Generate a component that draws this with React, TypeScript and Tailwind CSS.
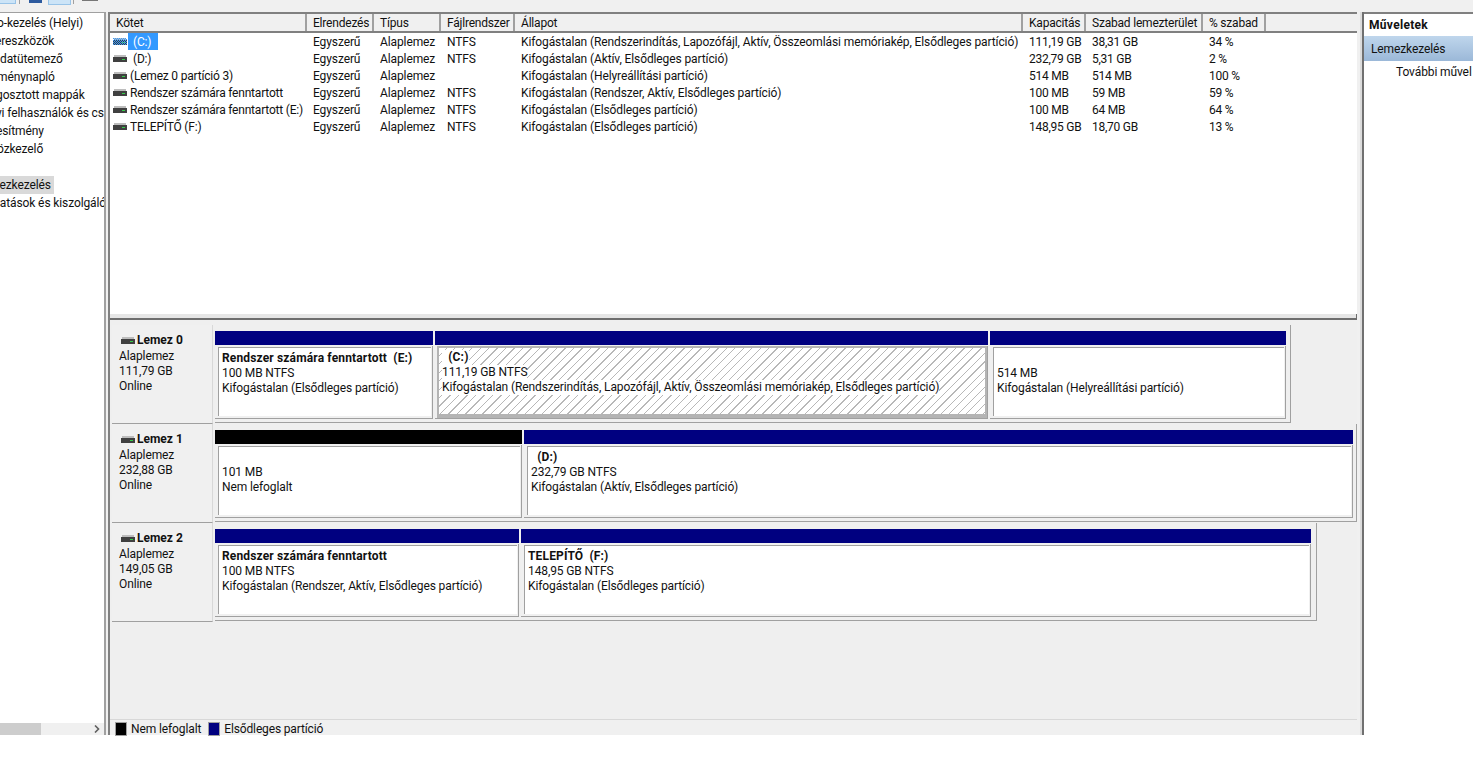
const font = "font-['Roboto',sans-serif]";

const columns = [
  { label: 'Kötet', w: 'w-[197px]' },
  { label: 'Elrendezés', w: 'w-[67px]' },
  { label: 'Típus', w: 'w-[67px]' },
  { label: 'Fájlrendszer', w: 'w-[74px]' },
  { label: 'Állapot', w: 'w-[508px]' },
  { label: 'Kapacitás', w: 'w-[63px]' },
  { label: 'Szabad lemezterület', w: 'w-[117px]' },
  { label: '% szabad', w: 'w-[63px]' },
];

const rows = [
  ['(C:)', 'Egyszerű', 'Alaplemez', 'NTFS', 'Kifogástalan (Rendszerindítás, Lapozófájl, Aktív, Összeomlási memóriakép, Elsődleges partíció)', '111,19 GB', '38,31 GB', '34 %'],
  ['(D:)', 'Egyszerű', 'Alaplemez', 'NTFS', 'Kifogástalan (Aktív, Elsődleges partíció)', '232,79 GB', '5,31 GB', '2 %'],
  ['(Lemez 0 partíció 3)', 'Egyszerű', 'Alaplemez', '', 'Kifogástalan (Helyreállítási partíció)', '514 MB', '514 MB', '100 %'],
  ['Rendszer számára fenntartott', 'Egyszerű', 'Alaplemez', 'NTFS', 'Kifogástalan (Rendszer, Aktív, Elsődleges partíció)', '100 MB', '59 MB', '59 %'],
  ['Rendszer számára fenntartott (E:)', 'Egyszerű', 'Alaplemez', 'NTFS', 'Kifogástalan (Elsődleges partíció)', '100 MB', '64 MB', '64 %'],
  ['TELEPÍTŐ (F:)', 'Egyszerű', 'Alaplemez', 'NTFS', 'Kifogástalan (Elsődleges partíció)', '148,95 GB', '18,70 GB', '13 %'],
];

// the pane is scrolled sideways, so the words start cut off at the left edge
const tree = [
  { t: 'o-kezelés (Helyi)', ml: '-ml-[3px]' },
  { t: 'ereszközök', ml: '-ml-[5px]' },
  { t: 'datütemező', ml: 'ml-0' },
  { t: 'ménynapló', ml: '-ml-[3px]' },
  { t: 'gosztott mappák', ml: '-ml-[4px]' },
  { t: 'yi felhasználók és cs', ml: '-ml-[4px]' },
  { t: 'esítmény', ml: '-ml-[4px]' },
  { t: 'özkezelő', ml: '-ml-[3px]' },
  { t: '', ml: '' },
  { t: 'nezkezelés', ml: '-ml-[7px]', selected: true },
  { t: 'tatások és kiszolgáló', ml: '-ml-[4px]' },
];

function DiskIcon({ striped }: { striped?: boolean }) {
  return (
    <svg width="14" height="7" viewBox="0 0 14 7" className="shrink-0">
      {striped && (
        <defs>
          <pattern id="dots" width="2" height="2" patternUnits="userSpaceOnUse">
            <rect width="1" height="1" fill="#3399ff" />
            <rect x="1" y="1" width="1" height="1" fill="#3399ff" />
          </pattern>
        </defs>
      )}
      <rect x="1" y="0" width="12" height="2" fill="#bdbdbd" />
      <rect x="0" y="2" width="14" height="5" fill="#404040" />
      <rect x="9" y="4" width="3" height="1" fill="#35d04a" />
      {striped && <rect x="0" y="0" width="14" height="7" fill="url(#dots)" />}
    </svg>
  );
}

function Partition({ w, bar, title, lines, selected }: { w: string; bar: string; title?: string; lines: string[]; selected?: boolean }) {
  return (
    <div className={`${w} shrink-0 flex flex-col`}>
      <div className={`h-[14px] shrink-0 ${bar}`} />
      <div className={`flex-1 min-h-0 mt-[1px] bg-[#f0f0f0] border-r border-b border-[#a0a0a0] ${selected ? 'pl-[2px]' : 'pl-[3px] pt-[1px] pr-[1px] pb-[2px]'}`}>
        {selected ? (
          <div className="h-full border-l-2 border-t-2 border-r-2 border-b-4 border-[#b4b4b4] px-[3px] pt-[2px] leading-[15px] bg-[repeating-linear-gradient(135deg,#ffffff_0px,#ffffff_5px,#b8b8b8_5px,#b8b8b8_6px)]">
            <div className="font-bold tracking-[0.15px] h-[15px] w-fit bg-white whitespace-pre">{title ?? ''}</div>
            {lines.map((l) => (
              <div key={l} className="h-[15px] w-fit bg-white whitespace-nowrap">{l}</div>
            ))}
          </div>
        ) : (
          <div className="h-full border-t border-l border-[#a0a0a0] bg-white px-[3px] pt-[3px] leading-[15px]">
            <div className="font-bold tracking-[0.15px] h-[15px] whitespace-pre">{title ?? ''}</div>
            {lines.map((l) => (
              <div key={l} className="h-[15px] whitespace-nowrap">{l}</div>
            ))}
          </div>
        )}
      </div>
    </div>
  );
}

function DiskRow({ name, size, frame, children }: { name: string; size: string; frame: string; children: React.ReactNode }) {
  return (
    <div className="flex h-[99px] shrink-0">
      <div className="w-[101px] ml-[2px] shrink-0 h-[99px] border-b border-[#a0a0a0] bg-[#f0f0f0] border-r border-r-[#d8d8d8] pl-[7px] pt-[7px] leading-[15px]">
        <div className="flex items-center gap-[2px] font-bold tracking-normal h-[16px] mb-[1px]">
          <span className="ml-[2px] flex"><DiskIcon /></span>
          {name}
        </div>
        <div>Alaplemez</div>
        <div>{size}</div>
        <div>Online</div>
      </div>
      <div className={`${frame} ml-[2px] h-[98px] shrink-0 border-r border-b border-[#a0a0a0] pt-[6px] pb-[3px]`}>
        <div className="flex h-full gap-[2px]">{children}</div>
      </div>
    </div>
  );
}

export default function App() {
  return (
    <div className={`${font} w-[1473px] h-[766px] overflow-hidden bg-white text-[12px] tracking-[-0.11px] text-[#111]`}>
      {/* toolbar, cut off at the top */}
      <div className="h-[12px] bg-[#f0f0f0] flex items-start">
        <div className="w-[16px] h-[4px] bg-[#cce4f7] border-r border-b border-[#99c4e8]" />
        <div className="w-px h-[4px] ml-[3px] bg-[#a0a0a0]" />
        <div className="w-[13px] h-[3px] ml-[9px] bg-[#2d5a9e]" />
        <div className="w-[23px] h-[5px] ml-[6px] bg-[#cce4f7] border border-t-0 border-[#99c4e8]" />
        <div className="w-px h-[4px] ml-[2px] bg-[#a0a0a0]" />
        <div className="w-[16px] h-[1px] ml-[8px] bg-[#777]" />
      </div>

      <div className="h-[723px] flex">
        {/* tree */}
        <div className="w-[104px] shrink-0 border-t border-[#a0a0a0] bg-white flex flex-col overflow-hidden">
          <div className="flex-1 pt-[1px]">
            {tree.map((item, i) => (
              <div key={i} className={`h-[18px] leading-[18px] whitespace-nowrap overflow-hidden ${item.selected ? 'bg-[#d9d9d9] w-[54px]' : ''}`}>
                {item.t && <div className={item.ml}>{item.t}</div>}
              </div>
            ))}
          </div>
          <div className="h-[12px] bg-[#f0f0f0] flex items-center">
            <div className="w-[41px] h-full bg-[#cdcdcd]" />
            <svg width="6" height="8" viewBox="0 0 6 8" className="ml-auto mr-[4px]">
              <path d="M1 0.5 L4.5 4 L1 7.5" fill="none" stroke="#606060" strokeWidth="1.6" />
            </svg>
          </div>
        </div>

        {/* splitter */}
        <div className="w-[6px] shrink-0 bg-[#f0f0f0] border-l-2 border-l-[#a0a0a0] border-r-2 border-r-[#808080]" />

        {/* center */}
        <div className="w-[1247px] shrink-0 flex flex-col border-t-2 border-[#808080] bg-[#efefef]">
          <div className="h-[300px] shrink-0 bg-white flex flex-col">
            <div className="flex h-[19px] bg-[#f0f0f0] border-b-2 border-[#808080] shrink-0 tracking-[-0.2px]">
              {columns.map((c) => (
                <div key={c.label} className={`${c.w} shrink-0 border-r-2 border-[#a0a0a0] pl-[6px] leading-[18px] whitespace-nowrap`}>
                  {c.label}
                </div>
              ))}
            </div>
            {rows.map((r, i) => (
              <div key={i} className="flex h-[17px] leading-[19px] shrink-0">
                {r.map((cell, j) =>
                  j === 0 ? (
                    <div key={j} className="w-[197px] shrink-0 flex items-center pl-[3px] whitespace-nowrap tracking-[-0.2px]">
                      <DiskIcon striped={i === 0} />
                      {i === 0 ? (
                        <span className="ml-[1px] w-[30px] h-[17px] bg-[#3399ff] text-white pl-[5px]">{cell}</span>
                      ) : i === 1 ? (
                        <span className="ml-[6px] h-[17px]">{cell}</span>
                      ) : (
                        <span className="ml-[3px] h-[17px]">{cell}</span>
                      )}
                    </div>
                  ) : (
                    <div key={j} className={`${columns[j].w} shrink-0 pl-[6px] whitespace-nowrap ${j >= 5 ? 'tracking-[-0.25px]' : ''}`}>
                      {cell}
                    </div>
                  ),
                )}
              </div>
            ))}
          </div>
          <div className="h-[6px] shrink-0 bg-[#e6e6e6] border-b-2 border-r border-b-[#6e6e6e] border-r-[#6e6e6e]" />

          <div className="flex-1 pt-[5px] flex flex-col">
            <DiskRow name="Lemez 0" size="111,79 GB" frame="w-[1076px]">
              <Partition w="w-[218px]" bar="bg-[#000080]" title={'Rendszer számára fenntartott\u00a0\u00a0(E:)'} lines={['100 MB NTFS', 'Kifogástalan (Elsődleges partíció)']} />
              <Partition w="w-[553px]" bar="bg-[#000080]" title={'\u00a0\u00a0(C:)'} lines={['111,19 GB NTFS', 'Kifogástalan (Rendszerindítás, Lapozófájl, Aktív, Összeomlási memóriakép, Elsődleges partíció)']} selected />
              <Partition w="w-[296px]" bar="bg-[#000080]" lines={['514 MB', 'Kifogástalan (Helyreállítási partíció)']} />
            </DiskRow>
            <DiskRow name="Lemez 1" size="232,88 GB" frame="w-[1142px]">
              <Partition w="w-[307px]" bar="bg-black" lines={['101 MB', 'Nem lefoglalt']} />
              <Partition w="w-[829px]" bar="bg-[#000080]" title={'\u00a0\u00a0(D:)'} lines={['232,79 GB NTFS', 'Kifogástalan (Aktív, Elsődleges partíció)']} />
            </DiskRow>
            <DiskRow name="Lemez 2" size="149,05 GB" frame="w-[1102px]">
              <Partition w="w-[304px]" bar="bg-[#000080]" title="Rendszer számára fenntartott" lines={['100 MB NTFS', 'Kifogástalan (Rendszer, Aktív, Elsődleges partíció)']} />
              <Partition w="w-[790px]" bar="bg-[#000080]" title={'TELEPÍTŐ\u00a0\u00a0(F:)'} lines={['148,95 GB NTFS', 'Kifogástalan (Elsődleges partíció)']} />
            </DiskRow>
          </div>

          <div className="h-[16px] shrink-0 bg-[#f0f0f0] border-t border-[#d8d8d8] flex items-start pl-[5px] pt-[2px] leading-[14px]">
            <span className="w-[12px] h-[14px] shrink-0 bg-black border border-[#a0a0a0]" />
            <span className="ml-[4px]">Nem lefoglalt</span>
            <span className="ml-[7px] w-[12px] h-[14px] shrink-0 bg-[#000080] border border-[#a0a0a0]" />
            <span className="ml-[4px] tracking-[-0.15px]">Elsődleges partíció</span>
          </div>
        </div>

        {/* splitter */}
        <div className="w-[7px] shrink-0 bg-[#f0f0f0] border-r-2 border-r-[#707070] flex justify-end">
          <div className="w-[2px] h-full bg-[#dcdcdc]" />
        </div>

        {/* actions */}
        <div className="flex-1 bg-white border-t-2 border-[#808080] overflow-hidden whitespace-nowrap">
          <div className="h-[22px] pl-[5px] leading-[22px] font-bold tracking-[0.3px]">Műveletek</div>
          <div className="h-[25px] pl-[7px] leading-[26px] bg-[linear-gradient(to_bottom,#bfd6ec,#9bb8d8)]">Lemezkezelés</div>
          <div className="h-[22px] pl-[32px] leading-[22px]">További művel</div>
        </div>
      </div>
    </div>
  );
}
